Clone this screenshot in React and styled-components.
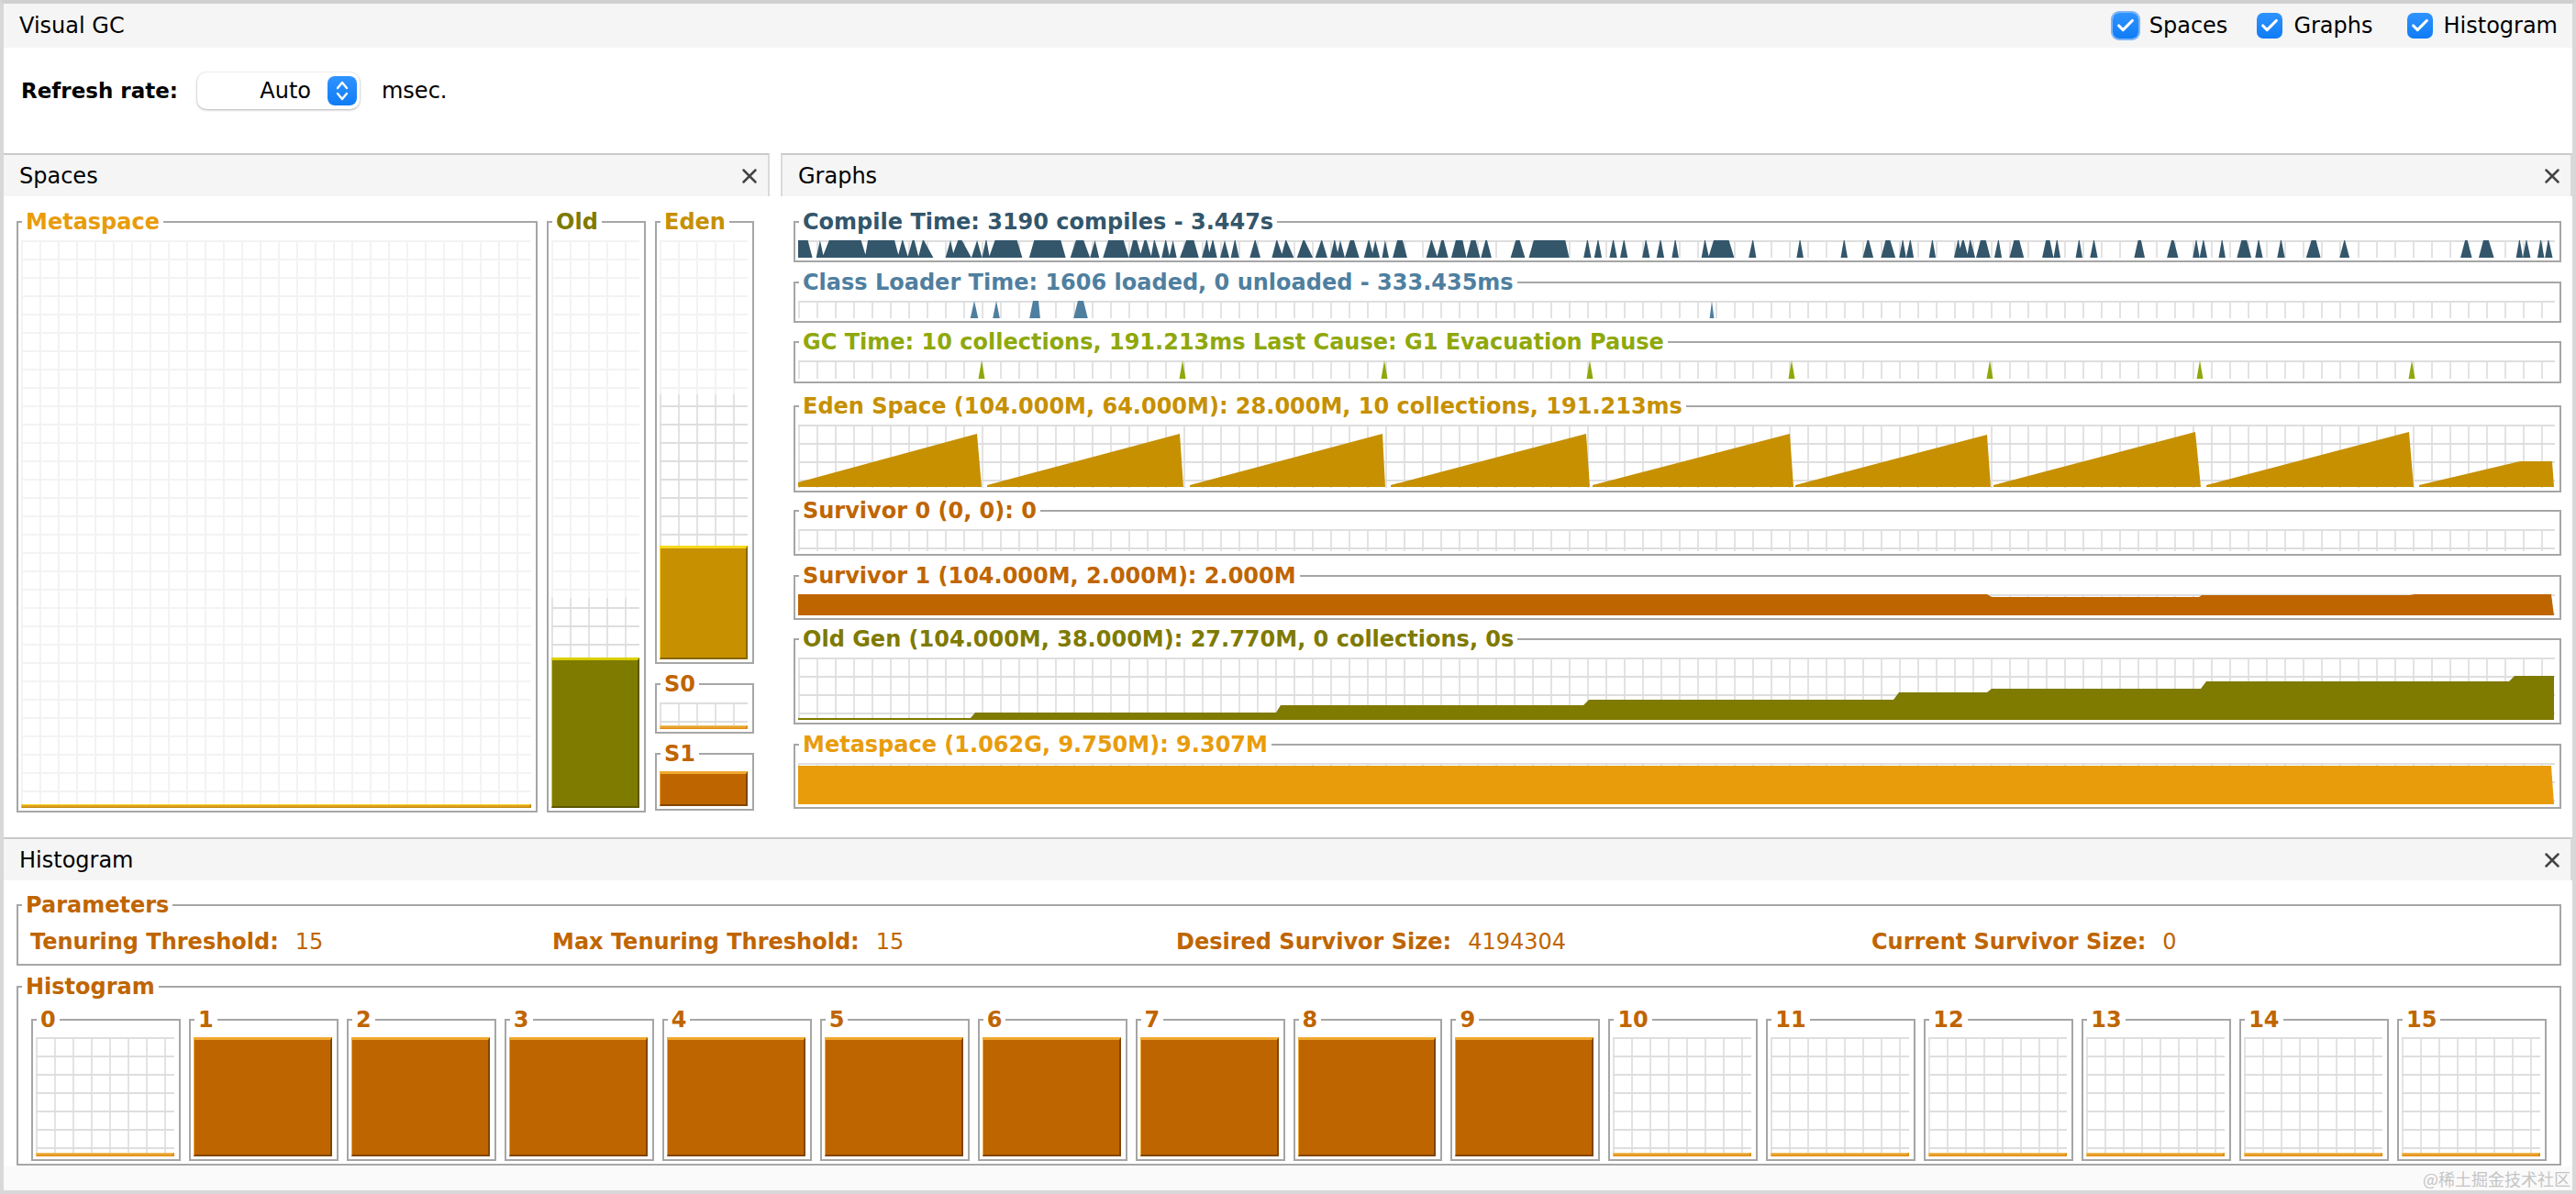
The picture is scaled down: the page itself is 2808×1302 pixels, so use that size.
import styled, { createGlobalStyle } from "styled-components";
import { Check, X } from "lucide-react";

const GlobalStyle = createGlobalStyle`
  html, body {
    margin: 0;
    padding: 0;
    background: #fff;
  }
  * {
    box-sizing: border-box;
  }
`;

const UI_FONT = `"DejaVu Sans", "Open Sans", sans-serif`;

const Colors = {
  compile: "#33566b",
  classLoader: "#4f7f9f",
  gc: "#8fa80b",
  eden: "#c69000",
  survivor: "#bf6500",
  old: "#7f7a00",
  metaspace: "#e89c0c",
};

const Window = styled.div`
  position: relative;
  width: 2808px;
  height: 1302px;
  display: flex;
  flex-direction: column;
  overflow: hidden;
  background: #fff;
  border: 4px solid #d8d8d8;
  border-top-color: #d0d0d0;
  font-family: ${UI_FONT};
  font-size: 24px;
  color: #000;
`;

const TitleBar = styled.header`
  height: 48px;
  flex: none;
  display: flex;
  align-items: center;
  justify-content: space-between;
  padding: 0 16px 0 17px;
  background: #f5f5f5;
`;

const Toggles = styled.div`
  display: flex;
  align-items: center;
  gap: 32px;
`;

const Toggle = styled.label`
  display: flex;
  align-items: center;
  gap: 12px;

  &:last-child {
    margin-left: 5px;
  }
`;

const CheckBox = styled.span`
  width: 28px;
  height: 28px;
  display: flex;
  align-items: center;
  justify-content: center;
  border-radius: 7px;
  color: #fff;
  background: linear-gradient(#2f93ff, #0f7cf5);
  box-shadow: ${(props) => (props.$focused ? "0 0 0 2px #7db4f5" : "none")};
`;

const RefreshRow = styled.div`
  height: 115px;
  flex: none;
  display: flex;
  align-items: center;
  padding: 0 0 21px 19px;
`;

const RefreshLabel = styled.span`
  font-size: 23px;
  font-weight: 700;
  margin-right: 21px;
`;

const SelectBox = styled.div`
  width: 177px;
  height: 40px;
  display: flex;
  align-items: center;
  justify-content: flex-end;
  gap: 18px;
  padding-right: 3px;
  margin-right: 24px;
  background: #fff;
  border-radius: 10px;
  box-shadow: 0 1px 3px rgba(0, 0, 0, 0.28), 0 0 0 1px rgba(0, 0, 0, 0.04);
`;

const Stepper = styled.span`
  width: 32px;
  height: 32px;
  display: flex;
  align-items: center;
  justify-content: center;
  border-radius: 8px;
  background: linear-gradient(#2f93ff, #0f7cf5);
`;

const PanelRow = styled.div`
  height: 746px;
  flex: none;
  display: flex;
  gap: 12px;
`;

const Panel = styled.section`
  flex: ${(props) => (props.$width ? `0 0 ${props.$width}px` : "1")};
  min-width: 0;
  display: flex;
  flex-direction: column;
`;

const PanelHeader = styled.div`
  height: 47px;
  flex: none;
  display: flex;
  align-items: center;
  justify-content: space-between;
  padding: 0 7px 0 17px;
  background: #f5f5f5;
  border-top: 2px solid #cacaca;
  border-right: 2px solid #dadada;
  border-left: ${(props) => (props.$divider ? "2px solid #dadada" : "0")};
`;

const CloseIcon = styled(X)`
  color: #444;
`;

const SpacesBody = styled.div`
  display: grid;
  grid-template-columns: 568px 108px 108px;
  column-gap: 10px;
  align-items: start;
  padding: 15px 0 0 14px;
`;

const SpaceStack = styled.div`
  display: flex;
  flex-direction: column;
  gap: 9px;
`;

const GraphsBody = styled.div`
  display: flex;
  flex-direction: column;
  padding: 15px 12px 0 14px;
`;

// Swing style titled border, the legend sits on the top line
const Group = styled.fieldset`
  min-width: 0;
  margin: ${(props) => props.$top || 0}px 0 0;
  padding: ${(props) => props.$pad ?? 7}px 5px 3px 3px;
  flex: none;
  border: 2px solid #a6a6a6;
`;

const Legend = styled.legend`
  margin-left: 1px;
  padding: 0 4px;
  font-size: 24px;
  line-height: 26px;
  font-weight: 700;
  white-space: nowrap;
  color: ${(props) => props.$color};
`;

const Plot = styled.div`
  position: relative;
  overflow: hidden;
  height: ${(props) => props.$height}px;
  display: flex;
  flex-direction: column;
`;

const GridArea = styled.div`
  flex: ${(props) => (props.$height ? "none" : "1")};
  height: ${(props) => (props.$height ? `${props.$height}px` : "auto")};
  background-color: #fff;
  background-image: linear-gradient(
      ${(props) => (props.$faint ? "#f3f3f3" : "#dedede")} 2px,
      transparent 2px
    ),
    linear-gradient(
      90deg,
      ${(props) => (props.$faint ? "#f3f3f3" : "#e3e3e3")} 2px,
      transparent 2px
    );
  background-size: 20px 20px;
  background-position: 0 ${(props) => props.$shift || 0}px;
`;

const Trace = styled.svg`
  position: absolute;
  left: 0;
  top: 0;
  width: 100%;
  height: 100%;
  display: block;
`;

const Fill = styled.div`
  flex: none;
  height: ${(props) => props.$height}px;
  background: ${(props) => props.$color};
  border-style: solid;
  border-width: ${(props) => (props.$thin ? "1px 2px 1px 1px" : "3px 2px 2px 1px")};
  border-top-color: ${(props) => props.$light};
  border-left-color: ${(props) => props.$light};
  border-right-color: ${(props) => props.$dark};
  border-bottom-color: ${(props) => props.$dark};
`;

const HistogramPanel = styled.section`
  flex: 1;
  display: flex;
  flex-direction: column;
  min-height: 0;
  background: #fafafa;
`;

const HistogramBody = styled.div`
  display: flex;
  flex-direction: column;
  gap: 10px;
  padding: 14px 12px 1px 14px;
  background: #fff;
`;

const ParamsRow = styled.div`
  display: grid;
  grid-template-columns: 569px 680px 758px 1fr;
  height: 48px;
  padding: 13px 0 0 10px;
  line-height: 28px;
  color: ${Colors.survivor};
`;

const ParamLabel = styled.span`
  font-weight: 700;
  margin-right: 18px;
`;

const BucketRow = styled.div`
  display: grid;
  grid-template-columns: repeat(16, 1fr);
  gap: 9px;
  padding: 3px 9px 0 11px;
`;

const Watermark = styled.div`
  position: absolute;
  right: 2px;
  bottom: 2px;
  font-family: "Noto Sans CJK SC", sans-serif;
  font-size: 18px;
  line-height: 22px;
  color: #c4c4c4;
`;

const spikes = (list, h, scale = 1, origin = 0) =>
  list
    .map(([a, b, c, d]) => {
      const x = (v) => (origin + v / scale).toFixed(1);
      return `M${x(a)} ${h}L${x(b)} 0L${x(c)} 0L${x(d)} ${h}Z`;
    })
    .join("");

const needles = (list, h, half) =>
  list.map((c) => `M${c - half} ${h}L${c} 0L${c + half} ${h}Z`).join("");

// compile activity, read off three stretches of the strip
const COMPILE_A = [
  [14, 14, 40, 52], [62, 72, 72, 82], [78, 96, 180, 194], [190, 198, 268, 280],
  [276, 288, 290, 304], [302, 315, 320, 332], [330, 342, 345, 370], [402, 415, 415, 425],
  [418, 435, 445, 470], [470, 485, 485, 498], [498, 508, 510, 518], [516, 532, 590, 604],
  [622, 635, 705, 718], [730, 745, 765, 782], [782, 795, 795, 806], [816, 830, 870, 884],
  [884, 895, 905, 918], [912, 925, 930, 944], [942, 950, 952, 966], [970, 980, 982, 992],
  [990, 1000, 1000, 1010], [1018, 1035, 1055, 1068], [1076, 1088, 1090, 1098],
  [1092, 1104, 1106, 1116], [1124, 1136, 1136, 1148], [1152, 1162, 1164, 1174],
  [1202, 1215, 1217, 1230], [1260, 1272, 1274, 1290], [1284, 1296, 1298, 1318],
  [1326, 1342, 1346, 1368], [1374, 1390, 1392, 1406], [1414, 1424, 1426, 1436],
  [1430, 1440, 1440, 1452], [1452, 1466, 1476, 1490], [1502, 1514, 1516, 1528],
  [1522, 1532, 1532, 1544],
];
const COMPILE_B = [
  [6, 14, 14, 24], [34, 46, 60, 72], [122, 135, 137, 152], [150, 162, 168, 180],
  [188, 200, 218, 228], [228, 240, 252, 264], [266, 278, 282, 294], [344, 358, 368, 382],
  [392, 405, 488, 498], [536, 545, 547, 556], [564, 573, 575, 584], [604, 613, 615, 624],
  [632, 641, 643, 652], [690, 699, 701, 710], [728, 737, 739, 748], [768, 776, 778, 786],
  [846, 854, 856, 866], [864, 878, 918, 932], [970, 980, 982, 990], [1096, 1104, 1106, 1114],
  [1212, 1220, 1222, 1230], [1270, 1282, 1286, 1298], [1318, 1330, 1342, 1356],
  [1366, 1374, 1376, 1384], [1384, 1394, 1396, 1404], [1444, 1452, 1454, 1462],
  [1510, 1520, 1522, 1530],
];
const COMPILE_C = [
  [-24, -12, -8, 4], [0, 8, 10, 22], [24, 36, 50, 62], [72, 82, 84, 92], [112, 124, 138, 150],
  [198, 208, 218, 228], [228, 236, 238, 246], [286, 294, 296, 304], [324, 333, 335, 344],
  [440, 450, 458, 468], [526, 538, 544, 556], [594, 602, 604, 612], [612, 621, 623, 632],
  [662, 670, 672, 680], [710, 722, 736, 748], [758, 766, 768, 778], [816, 825, 827, 836],
  [892, 906, 918, 930], [980, 992, 994, 1006], [1298, 1310, 1316, 1328], [1346, 1358, 1372, 1386],
  [1444, 1452, 1454, 1462], [1462, 1470, 1472, 1482], [1500, 1508, 1510, 1518],
  [1520, 1528, 1530, 1540],
];

const COMPILE_PATH =
  spikes(COMPILE_A, 19, 2.412, -6) +
  spikes(COMPILE_B, 19, 2.412, 634) +
  spikes(COMPILE_C, 19, 2.412, 1274);

const CLASS_PATH =
  "M187.5 20L192 0L196.500 20ZM212 20L216 0L220 20ZM252 20L256 0L262 0L264 20ZM300 20L305 0L311 0L316 20ZM993.500 20L996 0L998.500 20Z";

const GC_PATH = needles([200, 419, 639, 863, 1083, 1299, 1528, 1759], 20, 3.5);

const EDEN_PATH =
  "M0 63L195 10L200 68L0 68Z" +
  "M206 66L416 10L420 68L206 68Z" +
  "M427 66L637 10L640 68L427 68Z" +
  "M646 66L859 10L863 68L646 68Z" +
  "M866 66L1081 10L1085 68L866 68Z" +
  "M1087 66L1296 11L1300 68L1087 68Z" +
  "M1303 66L1523 8L1529 68L1303 68Z" +
  "M1535 66L1756 8L1761 68L1535 68Z" +
  "M1767 66L1877 40L1912 40L1914 68L1767 68Z";

const SURVIVOR_PATH =
  "M0 0L1296 0L1301 3L1527 3L1530 1L1757 1L1762 0L1911 0L1914 23L0 23Z";

const OLD_PATH =
  "M0 68L0 66L188 66L193 60L521 60L526 52L856 52L862 46L1194 46L1200 38L1296 38L1301 34L1529 34L1535 26L1865 26L1871 20L1914 20L1914 68Z";

const METASPACE_PATH = "M0 3L1911 3L1914 45L0 45Z";

const GRAPHS = [
  { title: "Compile Time: 3190 compiles - 3.447s", color: Colors.compile, h: 19, path: COMPILE_PATH },
  { title: "Class Loader Time: 1606 loaded, 0 unloaded - 333.435ms", color: Colors.classLoader, h: 19, top: 9, path: CLASS_PATH },
  { title: "GC Time: 10 collections, 191.213ms Last Cause: G1 Evacuation Pause", color: Colors.gc, h: 20, top: 8, path: GC_PATH },
  { title: "Eden Space (104.000M, 64.000M): 28.000M, 10 collections, 191.213ms", color: Colors.eden, h: 69, top: 12, path: EDEN_PATH },
  { title: "Survivor 0 (0, 0): 0", color: Colors.survivor, h: 24, top: 7 },
  { title: "Survivor 1 (104.000M, 2.000M): 2.000M", color: Colors.survivor, h: 23, top: 9, path: SURVIVOR_PATH },
  { title: "Old Gen (104.000M, 38.000M): 27.770M, 0 collections, 0s", color: Colors.old, h: 68, top: 8, path: OLD_PATH },
  { title: "Metaspace (1.062G, 9.750M): 9.307M", color: Colors.metaspace, h: 45, top: 9, path: METASPACE_PATH },
];

const PARAMS = [
  ["Tenuring Threshold:", "15"],
  ["Max Tenuring Threshold:", "15"],
  ["Desired Survivor Size:", "4194304"],
  ["Current Survivor Size:", "0"],
];

const BUCKETS = Array.from({ length: 16 }, (_, i) => i);

const ThinFill = () => (
  <Fill $thin $height={4} $color="#e8a030" $light="#f0c060" $dark="#e08e10" />
);

const Bucket = ({ index }) => {
  const full = index >= 1 && index <= 9;
  return (
    <Group $pad={6}>
      <Legend $color={Colors.survivor}>{index}</Legend>
      <Plot $height={130}>
        {full ? (
          <Fill $height={130} $color="#bf6500" $light="#f0a830" $dark="#804500" />
        ) : (
          <>
            <GridArea />
            <ThinFill />
          </>
        )}
      </Plot>
    </Group>
  );
};

export default function App() {
  return (
    <>
      <GlobalStyle />
      <Window>
        <TitleBar>
          <span>Visual GC</span>
          <Toggles>
            {["Spaces", "Graphs", "Histogram"].map((name, i) => (
              <Toggle key={name}>
                <CheckBox $focused={i === 0}>
                  <Check size={22} strokeWidth={3.4} />
                </CheckBox>
                {name}
              </Toggle>
            ))}
          </Toggles>
        </TitleBar>

        <RefreshRow>
          <RefreshLabel>Refresh rate:</RefreshLabel>
          <SelectBox>
            <span>Auto</span>
            <Stepper>
              <svg width="18" height="26" viewBox="0 0 18 26" fill="none" stroke="#fff" strokeWidth="2.4" strokeLinecap="round" strokeLinejoin="round">
                <path d="M4 10L9 4L14 10" />
                <path d="M4 16L9 22L14 16" />
              </svg>
            </Stepper>
          </SelectBox>
          <span>msec.</span>
        </RefreshRow>

        <PanelRow>
          <Panel $width={835}>
            <PanelHeader>
              Spaces
              <CloseIcon size={26} strokeWidth={2.3} />
            </PanelHeader>
            <SpacesBody>
              <Group>
                <Legend $color={Colors.metaspace}>Metaspace</Legend>
                <Plot $height={619}>
                  <GridArea $faint />
                  <Fill $thin $height={4} $color="#e0a020" $light="#f5d020" $dark="#c08a10" />
                </Plot>
              </Group>
              <Group>
                <Legend $color={Colors.old}>Old</Legend>
                <Plot $height={619}>
                  <GridArea $faint />
                  <GridArea $height={65} $shift={-10} />
                  <Fill $height={164} $color="#7f7a00" $light="#d8d000" $dark="#5c5800" />
                </Plot>
              </Group>
              <SpaceStack>
                <Group>
                  <Legend $color={Colors.eden}>Eden</Legend>
                  <Plot $height={457}>
                    <GridArea $faint />
                    <GridArea $height={165} $shift={-8} />
                    <Fill $height={124} $color="#c69000" $light="#f8d820" $dark="#8a6500" />
                  </Plot>
                </Group>
                <Group>
                  <Legend $color={Colors.survivor}>S0</Legend>
                  <Plot $height={29}>
                    <GridArea />
                    <ThinFill />
                  </Plot>
                </Group>
                <Group $pad={6}>
                  <Legend $color={Colors.survivor}>S1</Legend>
                  <Plot $height={38}>
                    <Fill $height={38} $color="#bf6500" $light="#f0a830" $dark="#804500" />
                  </Plot>
                </Group>
              </SpaceStack>
            </SpacesBody>
          </Panel>

          <Panel>
            <PanelHeader $divider>
              Graphs
              <CloseIcon size={26} strokeWidth={2.3} />
            </PanelHeader>
            <GraphsBody>
              {GRAPHS.map((graph) => (
                <Group key={graph.title} $top={graph.top}>
                  <Legend $color={graph.color}>{graph.title}</Legend>
                  <Plot $height={graph.h}>
                    <GridArea />
                    {graph.path && (
                      <Trace>
                        <path d={graph.path} fill={graph.color} />
                      </Trace>
                    )}
                  </Plot>
                </Group>
              ))}
            </GraphsBody>
          </Panel>
        </PanelRow>

        <HistogramPanel>
          <PanelHeader>
            Histogram
            <CloseIcon size={26} strokeWidth={2.3} />
          </PanelHeader>
          <HistogramBody>
            <Group $pad={0}>
              <Legend $color={Colors.survivor}>Parameters</Legend>
              <ParamsRow>
                {PARAMS.map(([label, value]) => (
                  <span key={label}>
                    <ParamLabel>{label}</ParamLabel>
                    {value}
                  </span>
                ))}
              </ParamsRow>
            </Group>
            <Group $pad={7}>
              <Legend $color={Colors.survivor}>Histogram</Legend>
              <BucketRow>
                {BUCKETS.map((i) => (
                  <Bucket key={i} index={i} />
                ))}
              </BucketRow>
            </Group>
          </HistogramBody>
        </HistogramPanel>
        <Watermark>@稀土掘金技术社区</Watermark>
      </Window>
    </>
  );
}
